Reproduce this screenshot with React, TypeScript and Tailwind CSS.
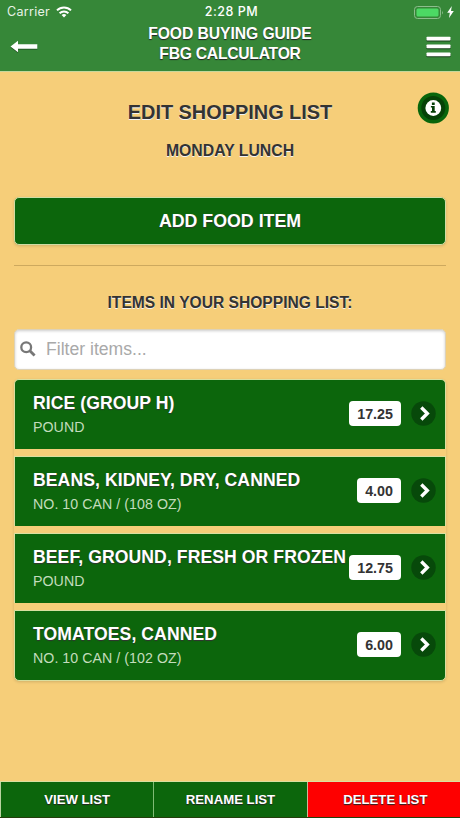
import React from "react";

type Item = { name: string; unit: string; qty: string };

const items: Item[] = [
  { name: "RICE (GROUP H)", unit: "POUND", qty: "17.25" },
  { name: "BEANS, KIDNEY, DRY, CANNED", unit: "NO. 10 CAN / (108 OZ)", qty: "4.00" },
  { name: "BEEF, GROUND, FRESH OR FROZEN", unit: "POUND", qty: "12.75" },
  { name: "TOMATOES, CANNED", unit: "NO. 10 CAN / (102 OZ)", qty: "6.00" },
];

function StatusBar() {
  return (
    <div className="grid h-[24px] grid-cols-3 items-center pl-[7px] pr-[6px] text-[13px] leading-none text-white">
      <div className="flex items-center gap-[6px]">
        <span className="font-[Inter,sans-serif] text-[12.5px] tracking-[0.3px] text-[#e8f3e6]">Carrier</span>
        <svg width="16" height="12" viewBox="0 0 16 12" fill="none" stroke="#fff" strokeWidth="2">
          <path d="M1 4.4a10 10 0 0 1 14 0" />
          <path d="M3.6 7.2a6.3 6.3 0 0 1 8.8 0" />
          <path d="M5.6 9.1a3.5 3.5 0 0 1 4.8 0L8 11.5z" fill="#fff" stroke="none" />
        </svg>
      </div>
      <span className="pl-[2px] text-center font-[Inter,sans-serif] text-[12.5px] font-medium tracking-[0.5px]">2:28 PM</span>
      <div className="flex items-center justify-end gap-[3px]">
        <svg width="30" height="13" viewBox="0 0 30 13">
          <rect x="0.5" y="0.5" width="26" height="12" rx="3" fill="none" stroke="#8dbd8d" />
          <rect x="2.5" y="2.5" width="22" height="8" rx="1.5" fill="#4cd964" />
          <path d="M28 4.5q1.6 2 0 4z" fill="#8dbd8d" />
        </svg>
        <svg width="7" height="12" viewBox="0 0 7 12">
          <path d="M4.8 0 0.2 6.8h2.6L2 12l4.8-7H4z" fill="#fff" />
        </svg>
      </div>
    </div>
  );
}

function Header() {
  return (
    <header className="h-[72px] shrink-0 border-b border-[#c5d79c] bg-[#368738]">
      <StatusBar />
      <div className="grid h-[47px] grid-cols-[40px_1fr_40px] items-start">
        <svg className="ml-[10px] mt-[16px] drop-shadow-[0_1px_0_rgba(0,0,0,0.35)]" width="28" height="13" viewBox="0 0 28 13">
          <path d="M0.5 6.5 8 0.8v3.4h19.3v4.6H8v3.4z" fill="#fff" />
        </svg>
        <h1 className="text-center text-[15.7px] font-bold leading-[20px] tracking-[-0.07px] text-white [text-shadow:0_1px_1px_#222]">
          FOOD BUYING GUIDE
          <br />
          <span className="tracking-[-0.26px]">FBG CALCULATOR</span>
        </h1>
        <svg className="ml-[6px] mt-[12px] drop-shadow-[0_1px_0_rgba(0,0,0,0.55)]" width="25" height="21" viewBox="0 0 25 21" fill="#fff">
          <rect x="0.5" y="0.7" width="24" height="3.8" rx="0.8" />
          <rect x="0.5" y="8.5" width="24" height="3.8" rx="0.8" />
          <rect x="0.5" y="16.4" width="24" height="3.8" rx="0.8" />
        </svg>
      </div>
    </header>
  );
}

function InfoButton() {
  return (
    <button className="absolute right-[11px] top-[20px] h-[32px] w-[32px]" aria-label="Information">
      <svg width="32" height="32" viewBox="0 0 32 32">
        <circle cx="16.3" cy="16" r="15.6" fill="#08650b" />
        <circle cx="16.3" cy="16" r="12" fill="#064207" />
        <circle cx="16.3" cy="16" r="7.9" fill="#fff" />
        <path d="M14.9 10.5h2.8v2.4h-2.8zM13.9 14h3.8v5h1.1v1.7h-5V19h1.2v-3.4h-1.1z" fill="#053f06" />
      </svg>
    </button>
  );
}

function Row({ item, first, last }: { item: Item; first: boolean; last: boolean }) {
  return (
    <li
      className={
        "flex items-center border-x border-t border-[#d9dfa0] bg-[#0c660c] pl-[18px] pr-[9px] text-white " +
        (first ? "rounded-t-[5px] " : "") +
        (last ? "h-[71px] rounded-b-[5px] border-b" : "h-[70px]")
      }
    >
      <div className="min-w-0 flex-1 self-start whitespace-nowrap pt-[12px]">
        <h3 className="w-0 text-[17.6px] font-bold leading-[22px] tracking-[0.08px] [text-shadow:0_1px_1px_#333]">{item.name}</h3>
        <p className="mt-[3px] text-[14.2px] leading-[20px] tracking-[0.05px] text-[#c3dcbc]">{item.unit}</p>
      </div>
      <span className="mb-[2px] mr-[10px] flex h-[25px] items-center rounded-[4px] bg-white px-[8px] pt-[2px] text-[14.3px] font-bold text-[#333]">
        {item.qty}
      </span>
      <svg className="mb-[2px]" width="25" height="25" viewBox="0 0 25 25">
        <circle cx="12.5" cy="12.5" r="12.2" fill="#07490a" />
        <path d="m10.3 6.5 6 6-6 6" fill="none" stroke="#fff" strokeWidth="3.4" />
      </svg>
    </li>
  );
}

const footerButton =
  "flex h-[35px] items-center justify-center text-[13.2px] font-bold text-white [text-shadow:0_1px_1px_#222]";

export default function App() {
  return (
    <div className="flex h-[818px] w-[460px] flex-col overflow-hidden bg-[#f6ce79] font-['Liberation_Sans',Arial,sans-serif] text-[#333]">
      <Header />
      <main className="relative flex-1 px-[14px]">
        <InfoButton />
        <h2 className="pt-[28px] text-center text-[19.9px] font-bold leading-[24px] [text-shadow:0_1px_0_#f3f3f3]">EDIT SHOPPING LIST</h2>
        <h3 className="mt-[17px] text-center text-[15.8px] font-bold leading-[20px] [text-shadow:0_1px_0_#f3f3f3]">MONDAY LUNCH</h3>
        <button className="mt-[36px] flex h-[48px] w-full items-center justify-center rounded-[5px] border border-[#cfdda4] bg-[#0c660c] text-[17.8px] font-bold text-white shadow-[0_1px_3px_rgba(0,0,0,0.15)] [text-shadow:0_1px_1px_#333]">
          ADD FOOD ITEM
        </button>
        <hr className="mt-[20px] border-[#cda95e]" />
        <h3 className="mt-[27px] text-center text-[15.6px] font-bold leading-[20px] [text-shadow:0_1px_0_#f3f3f3]">ITEMS IN YOUR SHOPPING LIST:</h3>
        <div className="mt-[16px] flex h-[41px] items-center rounded-[5px] border border-[#ddd2b8] bg-white pl-[5px] shadow-[inset_0_1px_3px_rgba(0,0,0,0.2)]">
          <svg className="mb-[2px]" width="16" height="16" viewBox="0 0 16 16" fill="none" stroke="#777" strokeWidth="2.3">
            <circle cx="6.2" cy="6.2" r="4.9" />
            <path d="m9.8 9.8 4.8 4.8" strokeWidth="2.8" />
          </svg>
          <input
            className="ml-[10px] min-w-0 flex-1 bg-transparent text-[17.6px] text-[#333] outline-none placeholder:text-[#a9a9a9]"
            placeholder="Filter items..."
          />
        </div>
        <ul className="mt-[9px] flex flex-col gap-[7px] rounded-[5px] shadow-[0_1px_3px_rgba(0,0,0,0.15)]">
          {items.map((item, i) => (
            <Row key={item.name} item={item} first={i === 0} last={i === items.length - 1} />
          ))}
        </ul>
      </main>
      <footer className="grid shrink-0 grid-cols-3 border-b border-t border-b-[#243f0c] border-t-[#d9dfa0] bg-[#0c660c]">
        <button className={footerButton + " border-l border-[#b9d3a0]"}>VIEW LIST</button>
        <button className={footerButton + " border-l border-[#7fbb74]"}>RENAME LIST</button>
        <button className={footerButton + " border-l border-[#c8b996] bg-[#fe0000] pl-[3px]"}>DELETE LIST</button>
      </footer>
    </div>
  );
}
